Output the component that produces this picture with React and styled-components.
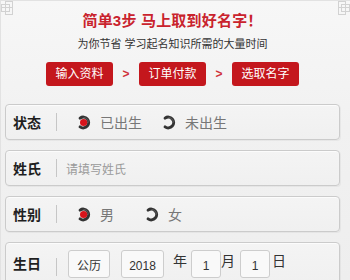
import React from "react";
import styled, { createGlobalStyle } from "styled-components";

const Global = createGlobalStyle`
  html, body { margin: 0; padding: 0; }
  body {
    width: 350px;
    height: 280px;
    overflow: hidden;
    font-family: "Liberation Sans", "Noto Sans CJK SC", sans-serif;
    background: #efefef;
  }
`;

const Page = styled.div`
  position: relative;
  width: 350px;
  height: 280px;
  box-sizing: border-box;
  overflow: hidden;
  background: linear-gradient(180deg, #f7f7f7 0%, #f1f1f1 45%, #eeeeee 100%);
  border-top: 1px solid #e2e2e2;
  border-left: 1px solid #e2e2e2;
  padding: 0 10px 0 4px;
  display: flex;
  flex-direction: column;
`;

const Corner = styled.svg`
  position: absolute;
  top: 0;
  ${(p) => (p.$side === "left" ? "left: 0;" : "right: 0;")}
  width: 16px;
  height: 16px;
`;

const Header = styled.div`
  display: flex;
  flex-direction: column;
  align-items: center;
  padding-top: 10px;
`;

const Title = styled.div`
  color: #c9232d;
  font-size: 15px;
  font-weight: bold;
  line-height: 20px;
  letter-spacing: 0.2px;
`;

const Subtitle = styled.div`
  margin-top: 5px;
  color: #333;
  font-size: 11px;
  line-height: 16px;
`;

const Steps = styled.div`
  margin-top: 10px;
  display: flex;
  align-items: center;
`;

const StepButton = styled.div`
  width: 67px;
  height: 24px;
  border-radius: 3px;
  background: #c4171d;
  color: #fff;
  font-size: 12px;
  line-height: 24px;
  text-align: center;
`;

const Arrow = styled.span`
  width: 26px;
  text-align: center;
  color: #d0303a;
  font-size: 12px;
  font-weight: bold;
  line-height: 24px;
`;

const Form = styled.div`
  margin-top: 18px;
  display: flex;
  flex-direction: column;
  gap: 10px;
`;

const Row = styled.div`
  height: ${(p) => p.$h || 36}px;
  box-sizing: border-box;
  border: 1px solid #cbcbcb;
  border-radius: 4px;
  background: linear-gradient(180deg, #f4f4f4, #f0f0f0);
  box-shadow: inset 0 1px 1px rgba(255, 255, 255, 0.8), 1px 1px 0 rgba(0, 0, 0, 0.04);
  display: flex;
  align-items: ${(p) => (p.$top ? "flex-start" : "center")};
  padding-left: 7px;
  padding-top: ${(p) => (p.$top ? 7 : 0)}px;
`;

const Label = styled.div`
  width: 28px;
  margin-top: ${(p) => p.$mt || 0}px;
  font-size: 14px;
  font-weight: bold;
  color: #1f1f1f;
  line-height: 20px;
  font-family: "Noto Sans CJK SC", sans-serif;
`;

const Sep = styled.div`
  align-self: center;
  width: 1px;
  height: 18px;
  background: #c6c6c6;
  margin-left: 15px;
  margin-right: ${(p) => p.$after || 9}px;
`;

const Placeholder = styled.div`
  font-size: 12px;
  color: #9a9a9a;
  font-family: "Noto Sans CJK SC", sans-serif;
`;

const RadioGroup = styled.div`
  display: flex;
  align-items: center;
  gap: ${(p) => p.$gap}px;
`;

const RadioItem = styled.div`
  display: flex;
  align-items: center;
  gap: 9px;
`;

const RadioText = styled.span`
  font-size: 14px;
  color: #777;
  font-family: "Noto Sans CJK SC", sans-serif;
  line-height: 20px;
`;

const Box = styled.div`
  width: ${(p) => p.$w}px;
  height: 28px;
  box-sizing: border-box;
  border: 1px solid #cdcdcd;
  border-radius: 3px;
  background: #f9f9f9;
  color: #333;
  font-size: 12px;
  line-height: 30px;
  text-align: center;
  margin-left: ${(p) => p.$ml || 0}px;
`;

const Unit = styled.span`
  font-size: 14px;
  color: #333;
  font-family: "Noto Sans CJK SC", sans-serif;
  margin-left: ${(p) => p.$ml || 0}px;
  line-height: 20px;
`;

function Radio({ checked }) {
  return (
    <svg width="15" height="15" viewBox="0 0 15 15">
      <path
        d="M4.1 3.1 A5.4 5.4 0 1 1 4.1 11.9"
        fill="none"
        stroke="#333"
        strokeWidth="3"
        strokeLinecap="round"
      />
      <path
        d="M7.5 2.6 A4.9 4.9 0 0 1 12.4 7.5"
        fill="none"
        stroke="#888"
        strokeWidth="1"
        opacity="0.5"
      />
      {checked && <circle cx="7.6" cy="7.5" r="3.6" fill="#d7141b" />}
    </svg>
  );
}

function CornerKnot({ side }) {
  const flip = side === "right" ? "scale(-1,1) translate(-16,0)" : undefined;
  return (
    <Corner $side={side} viewBox="0 0 16 16">
      <g transform={flip} fill="none" stroke="#d2d2d2" strokeWidth="1">
        <rect x="0.5" y="3.5" width="8" height="7" />
        <rect x="4.5" y="0.5" width="7" height="13" />
        <line x1="0.5" y1="6.5" x2="12" y2="6.5" />
      </g>
    </Corner>
  );
}

export default function App() {
  return (
    <>
      <Global />
      <Page>
        <CornerKnot side="left" />
        <CornerKnot side="right" />
        <Header>
          <Title>简单3步 马上取到好名字！</Title>
          <Subtitle>为你节省 学习起名知识所需的大量时间</Subtitle>
          <Steps>
            <StepButton>输入资料</StepButton>
            <Arrow>&gt;</Arrow>
            <StepButton>订单付款</StepButton>
            <Arrow>&gt;</Arrow>
            <StepButton>选取名字</StepButton>
          </Steps>
        </Header>
        <Form>
          <Row>
            <Label>状态</Label>
            <Sep $after={19} />
            <RadioGroup $gap={19}>
              <RadioItem>
                <Radio checked />
                <RadioText>已出生</RadioText>
              </RadioItem>
              <RadioItem>
                <Radio />
                <RadioText>未出生</RadioText>
              </RadioItem>
            </RadioGroup>
          </Row>
          <Row>
            <Label>姓氏</Label>
            <Sep $after={9} />
            <Placeholder>请填写姓氏</Placeholder>
          </Row>
          <Row>
            <Label>性别</Label>
            <Sep $after={19} />
            <RadioGroup $gap={30}>
              <RadioItem>
                <Radio checked />
                <RadioText>男</RadioText>
              </RadioItem>
              <RadioItem>
                <Radio />
                <RadioText>女</RadioText>
              </RadioItem>
            </RadioGroup>
          </Row>
          <Row $h={42} $top>
            <Label $mt={3}>生日</Label>
            <Sep $after={11} />
            <Box $w={42}>公历</Box>
            <Box $w={43} $ml={11}>2018</Box>
            <Unit $ml={9}>年</Unit>
            <Box $w={30} $ml={4}>1</Box>
            <Unit>月</Unit>
            <Box $w={30} $ml={5}>1</Box>
            <Unit $ml={2}>日</Unit>
          </Row>
        </Form>
      </Page>
    </>
  );
}
